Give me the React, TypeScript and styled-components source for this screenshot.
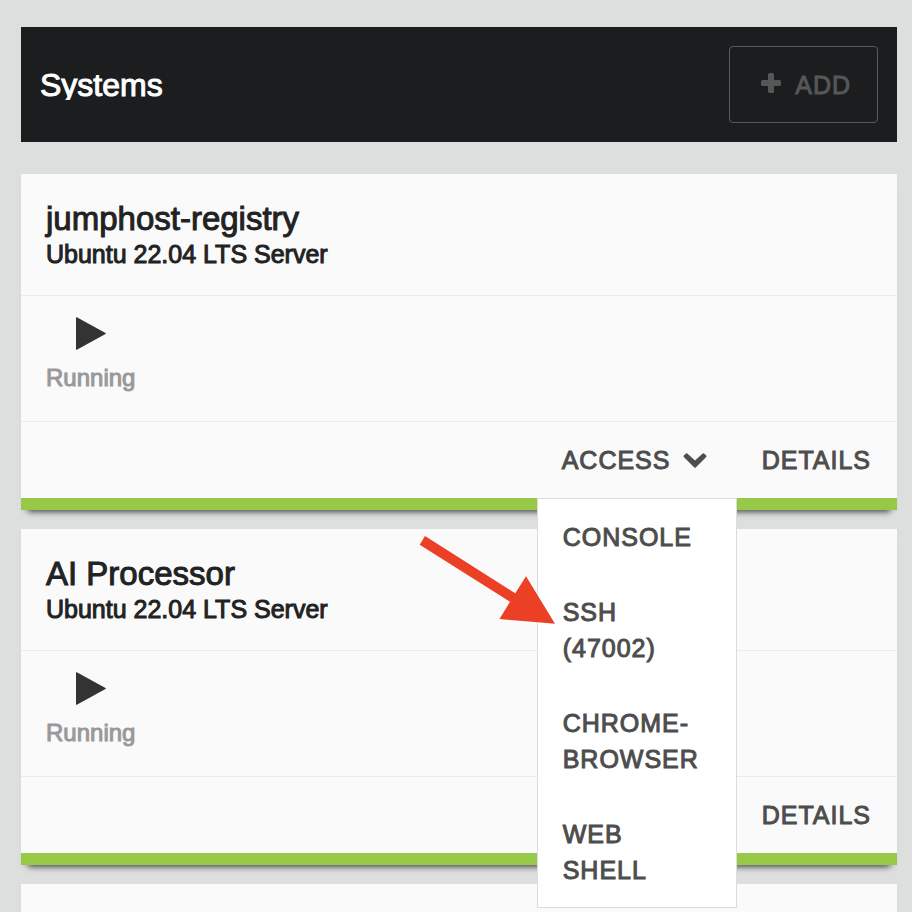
import React from "react";
import styled, { createGlobalStyle, css } from "styled-components";

const GlobalStyle = createGlobalStyle`
  *, *::before, *::after { box-sizing: border-box; }
  body {
    margin: 0;
    background: #dddfde;
    color: #222;
    font-family: "Liberation Sans", Arial, Helvetica, sans-serif;
  }
  h1, h2, p, ul { margin: 0; padding: 0; font-weight: 400; }
`;

/* Thickens the regular face to a medium weight. */
const medium = css`
  font-weight: 400;
  -webkit-text-stroke: 1px currentColor;
`;

const actionText = css`
  ${medium}
  font-family: inherit;
  font-size: 25px;
  line-height: 36px;
  letter-spacing: 1px;
  text-transform: uppercase;
  text-decoration: none;
  color: #4d4d4d;
`;

const Page = styled.main`
  display: flex;
  flex-direction: column;
  min-height: 100vh;
  padding: 27px 15px 0 21px;
`;

const Header = styled.header`
  display: flex;
  align-items: center;
  justify-content: space-between;
  padding: 19px;
  margin-bottom: 32px;
  background: #1c1d1e;
`;

const Title = styled.h1`
  ${medium}
  overflow: hidden;
  font-size: 32px;
  line-height: 30px;
  color: #fff;
`;

const AddButton = styled.button`
  ${actionText}
  display: flex;
  align-items: center;
  gap: 14px;
  padding: 20px 26px 19px 31px;
  border: 1px solid #58595a;
  border-radius: 4px;
  background: transparent;
  color: #555656;

  svg { margin-bottom: 4px; }
`;

const CardList = styled.section`
  display: flex;
  flex: 1;
  flex-direction: column;
  gap: 19px;
`;

const Card = styled.article`
  background: #fafafa;
  border-bottom: 12px solid #98c847;
  box-shadow: 0 9px 6px -7px rgba(0, 0, 0, 0.65), 0 2px 3px rgba(0, 0, 0, 0.03);
`;

const PartialCard = styled.div`
  flex: 1;
  min-height: 28px;
  background: #fafafa;
  box-shadow: 0 2px 3px rgba(0, 0, 0, 0.03);
`;

const CardHeader = styled.div`
  padding: 27px 25px 23px;
`;

const Name = styled.h2`
  ${medium}
  font-size: 33px;
  line-height: 36px;
`;

const System = styled.p`
  ${medium}
  font-size: 25px;
  line-height: 35px;
`;

const StatusRow = styled.div`
  display: flex;
  padding: 21px 25px 27px;
  border-top: 1px solid #ebebeb;
`;

const Status = styled.div`
  ${medium}
  display: flex;
  flex-direction: column;
  align-items: center;
  gap: 11px;
  font-size: 24px;
  line-height: 33px;
  color: #999;
`;

const Actions = styled.div`
  display: flex;
  justify-content: flex-end;
  border-top: 1px solid #ebebeb;
`;

const DetailsLink = styled.a`
  ${actionText}
  padding: 20px 26px 20px 25px;
`;

const Access = styled.div`
  position: relative;
  width: 200px;
`;

const AccessButton = styled.button`
  ${actionText}
  display: flex;
  align-items: center;
  gap: 13px;
  padding: 20px 25px;
  border: 0;
  background: transparent;
`;

const Menu = styled.ul`
  position: absolute;
  z-index: 2;
  top: 100%;
  left: 0;
  right: 0;
  border: 1px solid #dcdcdc;
  background: #fff;
  list-style: none;
`;

const MenuLink = styled.a`
  ${actionText}
  display: block;
  padding: 20px 25px 19px;
`;

const Arrow = styled.svg`
  position: absolute;
  z-index: 3;
  top: calc(100% + 38px);
  left: -118px;
  pointer-events: none;
`;

const PlusIcon = () => (
  <svg width="20" height="20" viewBox="0 0 20 20" fill="currentColor" aria-hidden="true">
    <rect x="7" y="0" width="6" height="20" rx="1.5" />
    <rect x="0" y="7" width="20" height="6" rx="1.5" />
  </svg>
);

const ChevronIcon = () => (
  <svg width="24" height="15" viewBox="0 0 24 15" fill="currentColor" aria-hidden="true">
    <path d="M.8 2.6 3 .4Q3.7-.1 4.3.5L12 7.4 19.7.5q.6-.6 1.3-.1l2.2 2.2q.6.7 0 1.4L12.7 14.5q-.7.6-1.4 0L.8 4q-.6-.7 0-1.4Z" />
  </svg>
);

const PlayIcon = () => (
  <svg width="30" height="33" viewBox="0 0 30 33" fill="#333" aria-hidden="true">
    <path d="M0 .5Q0 0 .8.2L29.5 16q.7.5 0 1L.8 32.8Q0 33 0 32.5Z" />
  </svg>
);

const menuItems = ["Console", "SSH (47002)", "Chrome-Browser", "Web Shell"];

const systems = [
  { name: "jumphost-registry", os: "Ubuntu 22.04 LTS Server", status: "Running", menuOpen: true },
  { name: "AI Processor", os: "Ubuntu 22.04 LTS Server", status: "Running", menuOpen: false },
];

function AccessMenu() {
  return (
    <Access>
      <AccessButton type="button" aria-haspopup="true" aria-expanded="true">
        Access
        <ChevronIcon />
      </AccessButton>
      <Menu>
        {menuItems.map((item) => (
          <li key={item}>
            <MenuLink href="#">{item}</MenuLink>
          </li>
        ))}
      </Menu>
      <Arrow width="136" height="88" viewBox="0 0 136 88" aria-hidden="true">
        <polygon
          points="6,0 96.3,57.3 107,40.3 136,87.8 80.5,83 91,65.7 .7,8.7"
          fill="#eb4026"
        />
      </Arrow>
    </Access>
  );
}

export default function App() {
  return (
    <>
      <GlobalStyle />
      <Page>
        <Header>
          <Title>Systems</Title>
          <AddButton type="button">
            <PlusIcon />
            Add
          </AddButton>
        </Header>
        <CardList>
          {systems.map((system) => (
            <Card key={system.name}>
              <CardHeader>
                <Name>{system.name}</Name>
                <System>{system.os}</System>
              </CardHeader>
              <StatusRow>
                <Status>
                  <PlayIcon />
                  {system.status}
                </Status>
              </StatusRow>
              <Actions>
                {system.menuOpen && <AccessMenu />}
                <DetailsLink href="#">Details</DetailsLink>
              </Actions>
            </Card>
          ))}
          <PartialCard />
        </CardList>
      </Page>
    </>
  );
}
